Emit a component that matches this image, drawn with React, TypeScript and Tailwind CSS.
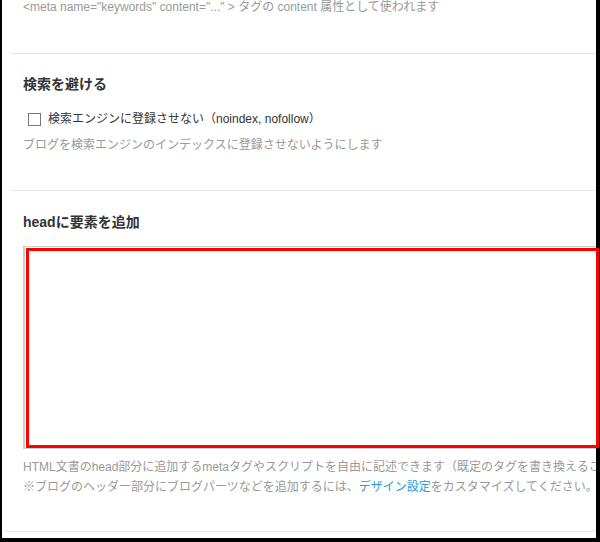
export default function App() {
  return (
    <div className="relative h-[542px] w-[600px] bg-black pb-[4px] pl-[2px] pr-[4px]">
      <div
        className="h-full overflow-hidden bg-white text-[12px] text-[#333]"
        style={{ fontFamily: '"Liberation Sans", "Noto Sans CJK JP", sans-serif' }}
      >
        {/* meta keywords (scrolled) */}
        <div className="ml-[9px] h-[54px] border-b border-[#e6e6e6] pl-[12px]">
          <p className="whitespace-nowrap leading-[14px] text-[#999]">
            &lt;meta name="keywords" content="..." &gt; タグの content 属性として使われます
          </p>
        </div>

        {/* noindex */}
        <div className="ml-[9px] h-[137px] border-b border-[#e6e6e6] pl-[12px] pt-[20px]">
          <h3 className="text-[14px] font-bold leading-[20px] text-[#333]">検索を避ける</h3>
          <label className="mt-[16px] flex h-[18px] items-center gap-[7px] pl-[5px]">
            <span className="h-[13px] w-[13px] border border-[#777] bg-white"></span>
            <span className="whitespace-nowrap leading-[18px]">
              検索エンジンに登録させない（noindex, nofollow）
            </span>
          </label>
          <p className="mt-[8px] whitespace-nowrap leading-[18px] text-[#999]">
            ブログを検索エンジンのインデックスに登録させないようにします
          </p>
        </div>

        {/* head */}
        <div className="ml-[2px] h-[341px] border-b border-[#e6e6e6] pl-[19px] pt-[21px]">
          <h3 className="text-[14px] font-bold leading-[20px] text-[#333]">headに要素を追加</h3>
          <div className="mt-[14px] h-[203px] w-[620px] border border-l-2 border-[#ccc] bg-white"></div>
          <div className="mt-[8px] whitespace-nowrap leading-[20px] text-[#999]">
            <p>
              HTML文書のhead部分に追加するmetaタグやスクリプトを自由に記述できます（既定のタグを書き換えることはできません）
            </p>
            <p>
              ※ブログのヘッダー部分にブログパーツなどを追加するには、
              <a className="text-[#2c9ad6]">デザイン設定</a>
              をカスタマイズしてください。
            </p>
          </div>
        </div>
      </div>

      {/* annotation */}
      <div className="absolute left-[26px] top-[248px] h-[200px] w-[573px] border-[3px] border-[#ff0000]"></div>
    </div>
  )
}
